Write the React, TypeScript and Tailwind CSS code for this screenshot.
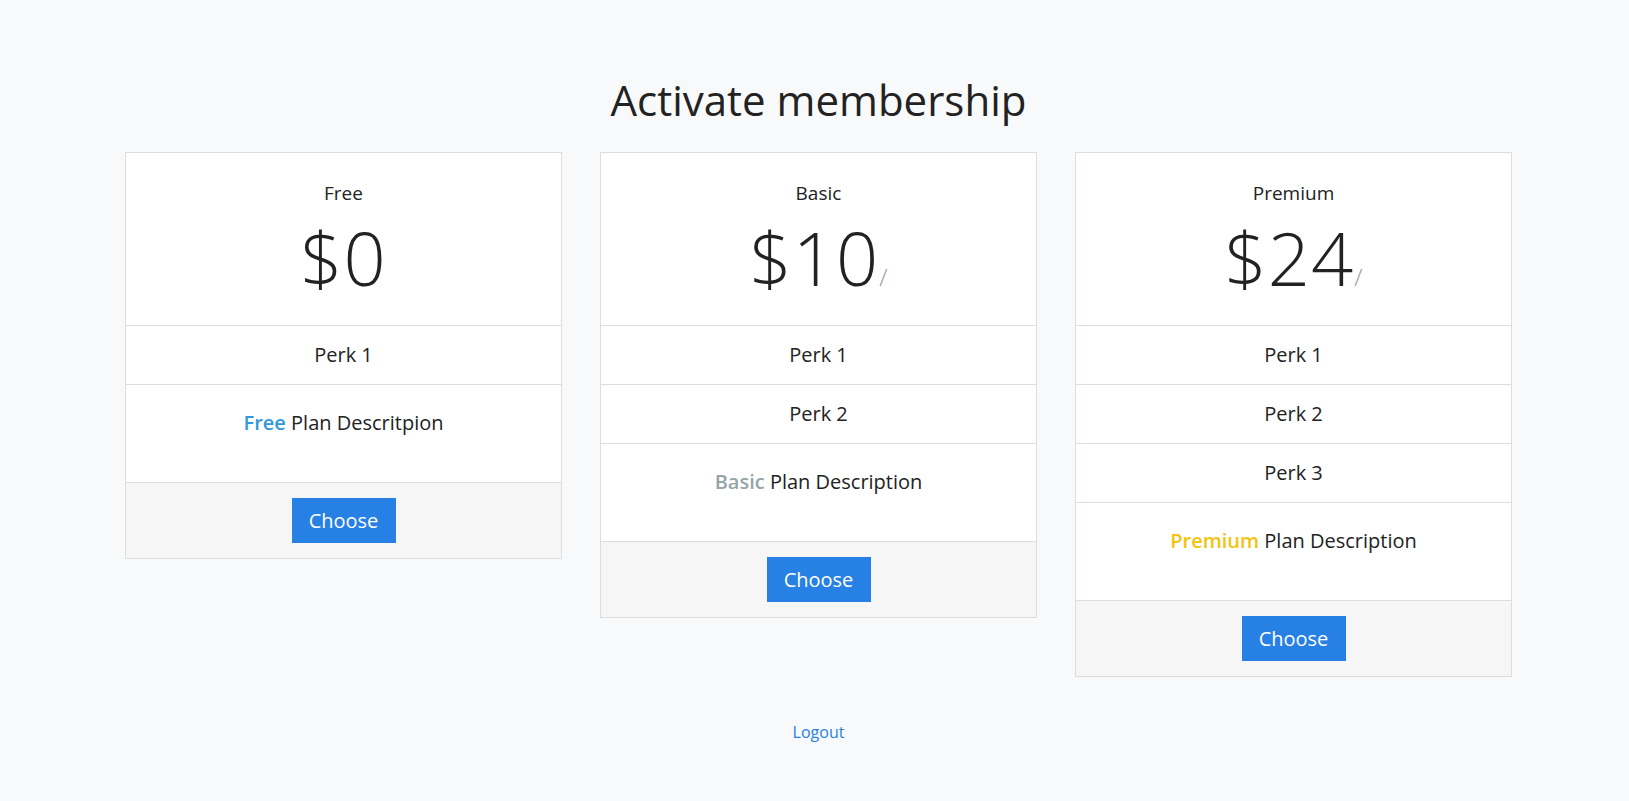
import React from 'react';

type Plan = {
  name: string;
  price: string;
  slash: boolean;
  perks: string[];
  accent: string;
  desc: string;
};

const plans: Plan[] = [
  { name: 'Free', price: '$0', slash: false, perks: ['Perk 1'], accent: 'text-[#3498db]', desc: 'Plan Descritpion' },
  { name: 'Basic', price: '$10', slash: true, perks: ['Perk 1', 'Perk 2'], accent: 'text-[#95a5a6]', desc: 'Plan Description' },
  { name: 'Premium', price: '$24', slash: true, perks: ['Perk 1', 'Perk 2', 'Perk 3'], accent: 'text-[#f1c40f]', desc: 'Plan Description' },
];

function PlanCard({ plan }: { plan: Plan }) {
  return (
    <div className="w-[437px] border border-[#dddddd] bg-white text-center">
      <div className="pt-[25px] pb-[24px]">
        <div className="text-[19px] leading-[30px]">{plan.name}</div>
        <div className="mt-[7px] h-[86px] flex items-baseline justify-center">
          <span className="text-[74px] leading-[86px] font-light tracking-[1px]">{plan.price}</span>
          {plan.slash && <span className="text-[24px] leading-[86px] font-light text-[#999999]">/</span>}
        </div>
      </div>
      {plan.perks.map((perk) => (
        <div key={perk} className="border-t border-[#dddddd] py-[14px] text-[20px] leading-[30px]">
          {perk}
        </div>
      ))}
      <div className="border-t border-[#dddddd] pt-[23px] pb-[44px] text-[20px] leading-[30px]">
        <span className={`font-semibold ${plan.accent}`}>{plan.name}</span> {plan.desc}
      </div>
      <div className="border-t border-[#dddddd] bg-[#f6f6f6] py-[15px] flex justify-center">
        <button className="w-[104px] h-[45px] bg-[#2780e3] text-white text-[20px]">Choose</button>
      </div>
    </div>
  );
}

export default function App() {
  return (
    <div className="min-h-screen bg-[#f8f9fa] text-[#222222] font-['Open_Sans',sans-serif]">
      <div className="w-[1395px] mx-auto pl-2 pt-[72px]">
        <h1 className="text-center text-[42px] leading-[56px] font-normal mb-[24px]">Activate membership</h1>
        <div className="flex items-start gap-[38px]">
          {plans.map((p) => (
            <PlanCard key={p.name} plan={p} />
          ))}
        </div>
        <div className="mt-[43px] text-center">
          <a href="#" className="text-[16px] text-[#2780e3]">Logout</a>
        </div>
      </div>
    </div>
  );
}
